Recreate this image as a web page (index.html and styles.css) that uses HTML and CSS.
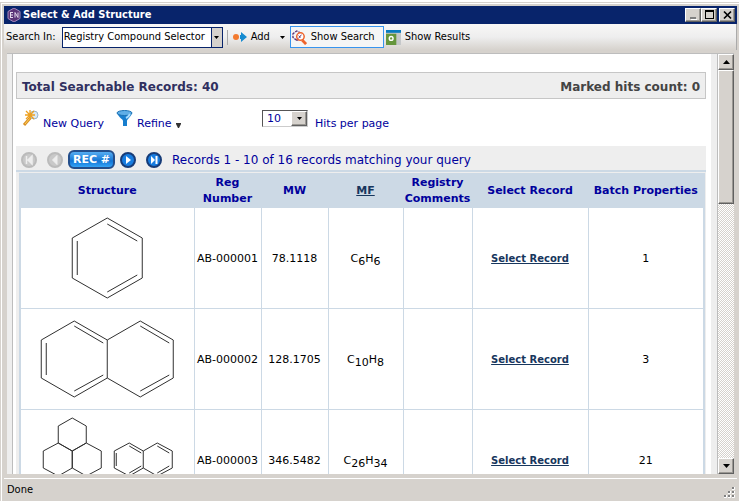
FILE: index.html
```html
<!DOCTYPE html>
<html lang="en">
<head>
<meta charset="utf-8">
<title>Select &amp; Add Structure</title>
<link rel="stylesheet" href="styles.css">
</head>
<body>
<div class="window">
  <header class="titlebar">
    <svg class="app-icon" viewBox="0 0 14 14" aria-hidden="true"><path d="M7 0l6 3.500v7L7 14l-6-3.500v-7z" fill="#5b3478" stroke="#a58abc"/><path d="M3 4.500h3M3 7h3M3 9.500h3M3.500 4.500v5M8 9.500v-5l3 5v-5" fill="none" stroke="#e6dcee"/></svg>
    <h1>Select &amp; Add Structure</h1>
    <div class="window-buttons">
      <button class="raised" aria-label="Minimize"><svg viewBox="0 0 12 10"><path d="M3 8h6" stroke="#808080" stroke-width="2"/><path d="M4 9.500h6" stroke="#fff"/></svg></button>
      <button class="raised" aria-label="Maximize"><svg viewBox="0 0 12 10"><path d="M2 1h9M2.500 0v9M10.500 0v9M2 8.500h9" fill="none" stroke="#000"/><path d="M2 1h9" stroke="#000" stroke-width="2"/></svg></button>
      <button class="raised close" aria-label="Close"><svg viewBox="0 0 12 10"><path d="M3 1.500l7 7M10 1.500l-7 7" stroke="#000" stroke-width="1.700"/></svg></button>
    </div>
  </header>
  <div class="toolbar">
    <label for="source">Search In:</label>
    <div class="combo">
      <select id="source"><option>Registry Compound Selector</option></select>
      <span class="combo-arrow" aria-hidden="true"><svg viewBox="0 0 5 3"><path d="M0 0h5L2.500 3z"/></svg></span>
    </div>
    <span class="separator"></span>
    <button class="tool add"><svg class="icon-add" viewBox="0 0 14 12"><circle cx="3" cy="6" r="3" fill="#f37a2f"/><path d="M8 1l6 5-6 5V8H7V4h1z" fill="#168bd0"/></svg>Add<svg class="drop" viewBox="0 0 5 3"><path d="M0 0h5L2.500 3z"/></svg></button>
    <button class="tool active"><svg class="icon-tool" viewBox="0 0 16 16"><path d="M5 11L1 8V4l4-3 4 2M5 11l2-1" fill="none" stroke="#5b3478" stroke-width="1.400" stroke-dasharray="3 1"/><circle cx="9" cy="7" r="4" fill="#fff" stroke="#ef642b" stroke-width="1.600"/><path d="M7 9l3-4M7 6l2 2" stroke="#5b3478"/><path d="M11 11l4 4" stroke="#ef642b" stroke-width="3"/></svg>Show Search</button>
    <button class="tool results"><svg class="icon-tool" viewBox="0 0 16 16"><path d="M0 1h16v15H0z" fill="#c5c8ca"/><path d="M0 4h11v12H0z" fill="#65963c"/><path d="M0 0h16v3H0z" fill="#087bbf"/><circle cx="5.500" cy="9" r="2" fill="none" stroke="#fff" stroke-width="1.500"/></svg>Show Results</button>
  </div>
  <main class="viewport">
    <div class="page">
      <section class="totals"><strong>Total Searchable Records: 40</strong><strong class="marked">Marked hits count: 0</strong></section>
      <div class="actions">
        <a href="#" class="query"><svg class="icon-query" viewBox="0 0 17 17"><path d="M2 15L9 7" stroke="#d99025" stroke-width="3"/><path d="M3 14L8 8" stroke="#ffd15b"/><circle cx="12" cy="5" r="4" fill="#dceaf4" stroke="#9bb6cb"/><path d="M8 0v10M3 5h10M4 1l8 8M12 1L4 9" stroke="#eea11f" stroke-width="1.300"/></svg>New Query</a>
        <a href="#" class="refine"><svg class="icon-query" viewBox="0 0 17 17"><path d="M1 3c2 5 6 6 6 8v5h4v-5c0-2 4-4 5-8z" fill="#187ece"/><ellipse cx="8.500" cy="3" rx="7.500" ry="2.500" fill="#5faee7" stroke="#1b72b5"/><path d="M10 8c2-1 3-2 4-4" stroke="#a7dcff" stroke-width="2" fill="none"/></svg>Refine<svg class="refine-drop" viewBox="0 0 5 5"><path d="M0 0h5v1L3 5H2L0 1z" fill="#333"/></svg></a>
        <div class="hits">
          <span class="hits-box"><select id="hits"><option>10</option></select><span class="hits-arrow raised" aria-hidden="true"><svg viewBox="0 0 5 3"><path d="M0 0h5L2.500 3z"/></svg></span></span>
          <label for="hits">Hits per page</label>
        </div>
      </div>
      <nav class="pager" aria-label="Records">
        <button aria-label="First" disabled><svg viewBox="0 0 16 16"><circle cx="8" cy="8" r="7" fill="#c9c9c9" stroke="#bbb" stroke-width="2"/><path d="M5.500 4v8M11 4L7 8l4 4z" fill="#eee" stroke="#eee" stroke-width="1.500"/></svg></button>
        <button aria-label="Previous" disabled><svg viewBox="0 0 16 16"><circle cx="8" cy="8" r="7" fill="#c9c9c9" stroke="#bbb" stroke-width="2"/><path d="M10 3.500L5.500 8l4.500 4.500z" fill="#eee" stroke="#eee"/></svg></button>
        <button class="record">REC #</button>
        <button aria-label="Next"><svg viewBox="0 0 16 16"><circle cx="8" cy="8" r="7" fill="#187de0" stroke="#173c78" stroke-width="2"/><path d="M6 4l5 4-5 4z" fill="#fff"/></svg></button>
        <button aria-label="Last"><svg viewBox="0 0 16 16"><circle cx="8" cy="8" r="7" fill="#187de0" stroke="#173c78" stroke-width="2"/><path d="M5 4l4 4-4 4z" fill="#fff"/><path d="M10.500 4v8" stroke="#fff" stroke-width="2"/></svg></button>
        <span>Records 1 - 10 of 16 records matching your query</span>
      </nav>
      <div class="table-wrap">
      <table>
        <colgroup><col class="c-structure"><col class="c-reg"><col class="c-mw"><col class="c-mf"><col class="c-comments"><col class="c-select"><col class="c-batch"></colgroup>
        <thead><tr><th>Structure</th><th>Reg<br>Number</th><th>MW</th><th><a href="#">MF</a></th><th>Registry<br>Comments</th><th>Select Record</th><th>Batch Properties</th></tr></thead>
        <tbody>
          <tr><td><svg class="structure" viewBox="0 0 172 100" role="img" aria-label="Benzene"><path d="M86 10l35 20v40L86 90 51 70V30zM86 16l30 17M116 67L86 84M56 67V33"/></svg></td><td>AB-000001</td><td>78.1118</td><td>C<sub>6</sub>H<sub>6</sub></td><td></td><td><a href="#">Select Record</a></td><td>1</td></tr>
          <tr><td><svg class="structure" viewBox="0 0 172 100" role="img" aria-label="Naphthalene"><path d="M53 12l33 19v38L53 88 20 69V31zM86 31l33-19 33 19v38l-33 19-33-19M53 17l29 17M82 66L53 82M25 66V34M119 17l29 17M148 66l-29 16"/></svg></td><td>AB-000002</td><td>128.1705</td><td>C<sub>10</sub>H<sub>8</sub></td><td></td><td><a href="#">Select Record</a></td><td>3</td></tr>
          <tr><td><svg class="structure" viewBox="0 0 172 100" role="img" aria-label="Pyrene derivative and naphthalene"><path d="M51 8l14 8v17l-14 8-14-8V16zM37 33l14 8v17l-14 8-15-8V41zM65 33l15 8v17l-15 8-14-8V41zM108 33l14 8v17l-14 8-15-8V41zM122 41l14-8 15 8v17l-15 8-14-8M108 36l12 7M95 56V43M120 56l-12 7M136 36l12 7M148 56l-12 7"/></svg></td><td>AB-000003</td><td>346.5482</td><td>C<sub>26</sub>H<sub>34</sub></td><td></td><td><a href="#">Select Record</a></td><td>21</td></tr>
        </tbody>
      </table>
      </div>
    </div>
    <div class="scrollbar" aria-hidden="true"><span class="raised arrow"><svg viewBox="0 0 7 4"><path d="M0 4h7L3.500 0z"/></svg></span><span class="raised thumb"></span><span class="track"></span><span class="raised arrow"><svg viewBox="0 0 7 4"><path d="M0 0h7L3.500 4z"/></svg></span></div>
  </main>
  <footer><span>Done</span><svg class="grip" viewBox="0 0 12 12" aria-hidden="true"><path d="M9 1h2v2H9zM5 5h2v2H5zM9 5h2v2H9zM1 9h2v2H1zM5 9h2v2H5zM9 9h2v2H9z" fill="#808080"/><path d="M9 3.500h2.500V1M5 7.500h2.500V5M9 7.500h2.500V5M1 11.500h2.500V9M5 11.500h2.500V9M9 11.500h2.500V9" fill="none" stroke="#fff"/></svg></footer>
</div>
</body>
</html>
```
FILE: styles.css
```css
* { box-sizing: border-box; }
body { margin: 0; background: #fff; color: #000; font: 11px/16px "DejaVu Sans", sans-serif; }
button, select { font: inherit; color: inherit; }
button { padding: 0; }
.window { display: flex; flex-direction: column; height: 100vh; padding: 2px 0 0 1px; background: #d6d2cd; border-top: 2px solid #fff; box-shadow: inset 1px 1px #d6d2cd, inset 2px 2px #fff; }
.titlebar { display: flex; align-items: center; height: 18px; flex: none; margin: 2px 2px 0 3px; padding: 0 2px 0 3px; background: #08246b; color: #fff; }
.app-icon { width: 14px; height: 14px; margin-right: 2px; }
h1 { margin: 0; font: bold 11px/18px "DejaVu Sans Condensed", "DejaVu Sans", sans-serif; }
.window-buttons { display: flex; margin-left: auto; }
.window-buttons button { display: flex; align-items: center; justify-content: center; width: 16px; height: 14px; }
.window-buttons svg { width: 12px; height: 10px; }
.window-buttons .close { margin-left: 2px; }
.raised { background: #d6d2cd; border: 1px solid; border-color: #fff #606060 #606060 #fff; box-shadow: inset -1px -1px #9b9893; }
.toolbar { display: flex; align-items: center; height: 26px; flex: none; margin: 0 2px 3px 3px; padding-left: 2px; font-family: "DejaVu Sans Condensed", "DejaVu Sans", sans-serif; background: linear-gradient(#f8f7f6, #eee 50%, #d6d2cd); border-right: 1px solid #aaa; }
.combo { display: flex; width: 161px; height: 21px; margin-left: 6px; border: 1px solid #08246b; background: #fff; }
.combo select { flex: 1; min-width: 0; padding: 0 1px; appearance: none; border: 0; background: #fff; }
.combo-arrow { display: flex; align-items: center; justify-content: center; width: 11px; background: #d6d2cd; border-left: 1px solid #08246b; }
.combo-arrow svg, .drop, .hits-arrow svg { width: 5px; height: 3px; }
.separator { width: 1px; height: 15px; margin: 0 4px; background: #aaa; }
.tool { display: flex; align-items: center; height: 22px; border: 1px solid transparent; background: none; white-space: nowrap; }
.icon-add { width: 14px; height: 12px; margin-right: 4px; }
.drop { margin: 0 4px 0 10px; }
.icon-tool { width: 15px; height: 15px; margin-right: 4px; }
.active { padding: 0 8px 0 1px; background: #f5f6f6; border-color: #3794ee; }
.results { padding-left: 1px; }
.viewport { display: flex; flex: 1; min-height: 0; margin: 0 5px 0 6px; border-top: 1px solid #bdbdbd; }
.page { flex: 1; min-width: 0; overflow: hidden; padding: 18px 5px 0 4px; background: #fff; border: solid #eee; border-width: 0 6px 0 5px; box-shadow: inset 1px 0 #bdbdbd; }
.totals { display: flex; justify-content: space-between; height: 27px; padding: 1px 5px 0; line-height: 26px; border: 1px solid #c6c6c6; background: #eee; color: #303060; font-size: 12px; }
.totals .marked { color: #444; }
.actions { display: flex; align-items: flex-start; height: 47px; padding: 11px 6px 0; color: #00009c; }
.actions a { display: flex; color: inherit; text-decoration: none; }
.query { width: 94px; }
.icon-query { width: 17px; height: 17px; margin-right: 4px; }
.query, .refine { line-height: 28px; }
.refine { width: 146px; }
.refine-drop { width: 5px; height: 5px; margin: 13px 0 0 4px; }
.hits { display: flex; }
.hits label { line-height: 28px; margin-left: 7px; }
.hits-box { display: flex; width: 46px; height: 17px; border: 1px solid; border-color: #555 #ccc #ccc #555; background: #fff; font-size: 11px; }
.hits-box select { flex: 1; min-width: 0; appearance: none; border: 0; padding: 0 4px; background: #fff; }
.hits-arrow { display: flex; width: 16px; align-items: center; justify-content: center; }
.pager { display: flex; align-items: center; height: 24px; padding: 3px 5px 0; background: #eee; color: #00009c; font-size: 12px; }
.pager button { width: 16px; height: 16px; margin-right: 10px; border: 0; background: none; }
.pager button:nth-child(2), .pager .record { margin-right: 5px; }
.pager svg { display: block; width: 16px; height: 16px; }
.pager .record { width: 47px; height: 19px; border: 2px solid #244e8b; border-radius: 6px; background: linear-gradient(#56adf2, #1475d5 60%, #34a3f6); color: #fff; font-weight: bold; font-size: 11px; line-height: 14px; }
.table-wrap { padding: 3px 1px 0 3px; background: linear-gradient(#ccd9e5 2px, #eee 2px); }
table { width: 100%; table-layout: fixed; border-collapse: collapse; border: solid #ccd9e5; border-width: 0 2px 0 2px; background: #fff; }
th, td { padding: 1px 0 0; border: 1px solid #ccd9e5; text-align: center; vertical-align: middle; }
th { height: 34px; background: #ccd9e5; color: #00009c; white-space: nowrap; }
td { height: 101px; white-space: nowrap; }
td:first-child { padding: 0; }
a { color: #17365d; font-weight: bold; }
td a { font-size: 10px; }
.actions a { font-weight: normal; }
sub { font-size: 11px; line-height: 1px; vertical-align: -3px; }
.structure { display: block; width: 100%; height: 100px; fill: none; stroke: #303030; stroke-width: 1; }
.c-structure { width: 174px; } .c-reg { width: 67px; } .c-mw { width: 67px; } .c-mf { width: 75px; } .c-comments { width: 69px; } .c-select { width: 116px; }
.scrollbar { display: flex; flex-direction: column; width: 17px; flex: none; border-left: 1px solid #bdbdbd; background: #eee; }
.arrow { display: flex; align-items: center; justify-content: center; height: 16px; flex: none; }
.arrow svg { width: 7px; height: 4px; }
.thumb { flex: 0 0 32%; }
.track { flex: 1; background: repeating-conic-gradient(#d6d2cd 0% 25%, #fff 0% 50%) 0 0 / 2px 2px; }
footer { display: flex; align-items: center; height: 23px; flex: none; margin: 4px 2px 0 3px; padding: 0 2px 0 3px; border-top: 1px solid #fff; font-family: "DejaVu Sans Condensed", "DejaVu Sans", sans-serif; }
.grip { width: 12px; height: 12px; margin: 4px 0 0 auto; }
```
